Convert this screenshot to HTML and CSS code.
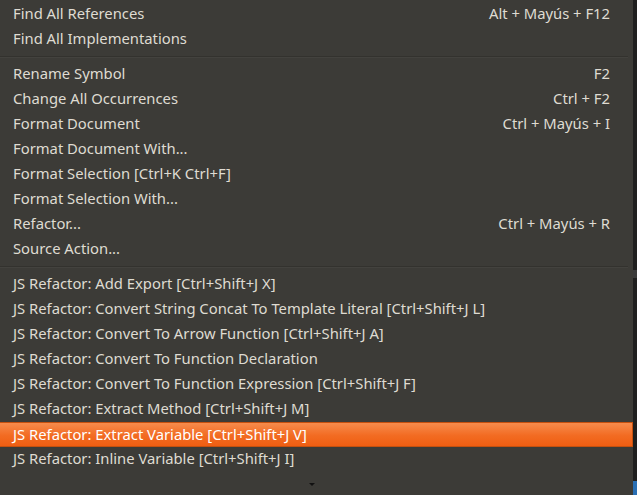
FILE: index.html
```html
<!DOCTYPE html>
<html>
<head>
<meta charset="utf-8">
<link rel="stylesheet" href="styles.css">
</head>
<body>
<div class="screen">
  <div class="menu">
    <div class="item"><span class="label">Find All References</span><span class="key">Alt + Mayús + F12</span></div>
    <div class="item"><span class="label">Find All Implementations</span></div>
    <div class="sep"></div>
    <div class="item"><span class="label">Rename Symbol</span><span class="key">F2</span></div>
    <div class="item"><span class="label">Change All Occurrences</span><span class="key">Ctrl + F2</span></div>
    <div class="item"><span class="label">Format Document</span><span class="key">Ctrl + Mayús + I</span></div>
    <div class="item"><span class="label">Format Document With...</span></div>
    <div class="item"><span class="label">Format Selection [Ctrl+K Ctrl+F]</span></div>
    <div class="item"><span class="label">Format Selection With...</span></div>
    <div class="item"><span class="label">Refactor...</span><span class="key">Ctrl + Mayús + R</span></div>
    <div class="item"><span class="label">Source Action...</span></div>
    <div class="sep"></div>
    <div class="item"><span class="label">JS Refactor: Add Export [Ctrl+Shift+J X]</span></div>
    <div class="item"><span class="label">JS Refactor: Convert String Concat To Template Literal [Ctrl+Shift+J L]</span></div>
    <div class="item"><span class="label">JS Refactor: Convert To Arrow Function [Ctrl+Shift+J A]</span></div>
    <div class="item"><span class="label">JS Refactor: Convert To Function Declaration</span></div>
    <div class="item"><span class="label">JS Refactor: Convert To Function Expression [Ctrl+Shift+J F]</span></div>
    <div class="item"><span class="label">JS Refactor: Extract Method [Ctrl+Shift+J M]</span></div>
    <div class="item active"><span class="label">JS Refactor: Extract Variable [Ctrl+Shift+J V]</span></div>
    <div class="item"><span class="label">JS Refactor: Inline Variable [Ctrl+Shift+J I]</span></div>
    <div class="more"><span class="arrow"></span></div>
  </div>
  <div class="edge">
    <div class="edge-a"></div>
    <div class="edge-b"></div>
    <div class="edge-c"></div>
    <div class="edge-d"></div>
  </div>
</div>
</body>
</html>
```

FILE: styles.css
```css
* { box-sizing: border-box; }
html, body { margin: 0; padding: 0; }
body {
  width: 637px;
  height: 495px;
  overflow: hidden;
  background: #3c3b37;
  font-family: "Noto Sans", "DejaVu Sans", sans-serif;
  font-size: 14.8px;
  color: #dfdbd2;
}
.screen {
  display: flex;
  height: 495px;
}
.menu {
  width: 633px;
  flex: none;
  background: #3c3b37;
  padding-top: 2px;
  display: flex;
  flex-direction: column;
}
.item {
  height: 25px;
  display: flex;
  align-items: center;
  justify-content: space-between;
  padding: 0 23px 3px 13px;
  white-space: nowrap;
}
.item.active {
  background: linear-gradient(#f68b4c, #f26b22 55%, #ef5e12);
  border: 1px solid #c5500f;
  border-left: none;
  padding-left: 13px;
  padding-bottom: 2px;
  color: #ffffff;
}
.sep {
  height: 10px;
  display: flex;
  flex-direction: column;
  justify-content: center;
}
.sep::before {
  content: "";
  display: block;
  margin-right: 5px;
  height: 1px;
  background: #33322e;
}
.sep::after {
  content: "";
  display: block;
  margin-right: 5px;
  height: 1px;
  background: #43423e;
}
.more {
  flex: 1;
  display: flex;
  justify-content: center;
  align-items: center;
  padding-right: 10px;
  padding-top: 2px;
}
.arrow {
  width: 0;
  height: 0;
  border-left: 3px solid transparent;
  border-right: 3px solid transparent;
  border-top: 3px solid #111;
}
.edge {
  flex: 1;
  background: #1f1f1f;
  display: flex;
  flex-direction: column;
}
.edge-a { height: 270px; }
.edge-b { height: 8px; background: #3a3a3a; }
.edge-c { flex: 1; }
.edge-d { height: 14px; background: #2a6fb4; }
```
